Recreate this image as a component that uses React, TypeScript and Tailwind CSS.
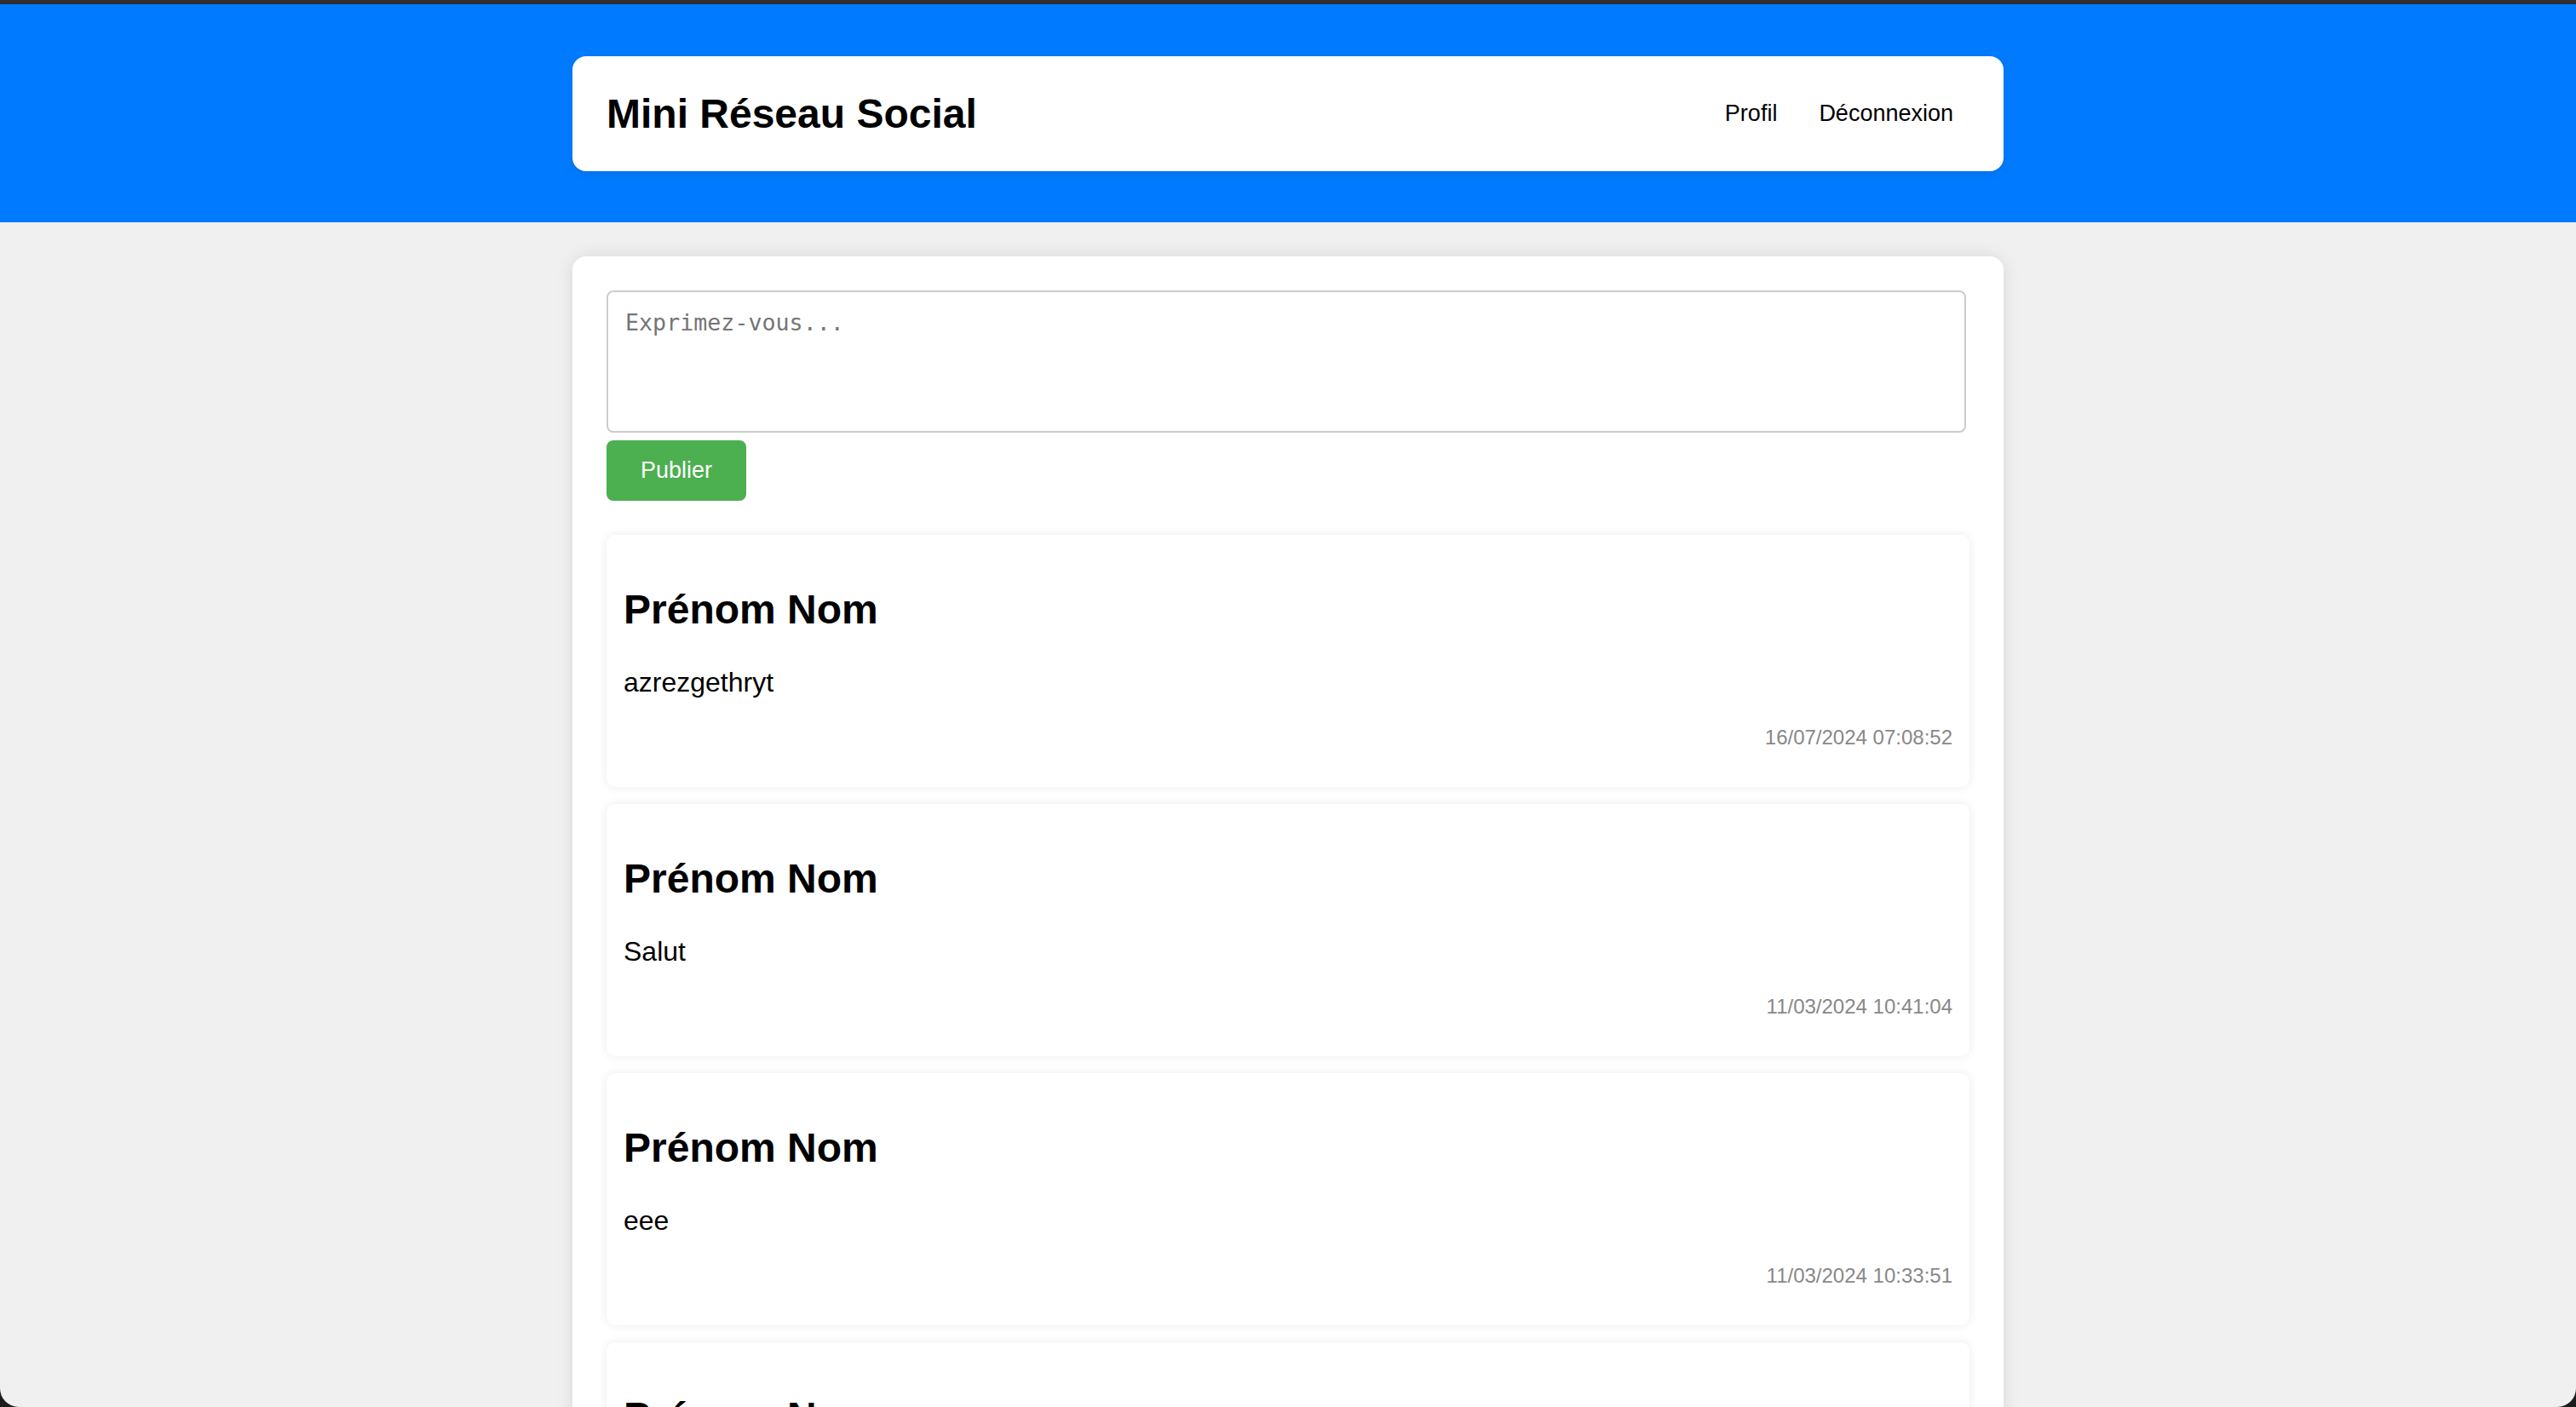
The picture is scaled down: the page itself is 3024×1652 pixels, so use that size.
const posts = [
  { author: 'Prénom Nom', content: 'azrezgethryt', date: '16/07/2024 07:08:52' },
  { author: 'Prénom Nom', content: 'Salut', date: '11/03/2024 10:41:04' },
  { author: 'Prénom Nom', content: 'eee', date: '11/03/2024 10:33:51' },
  { author: 'Prénom Nom', content: 'test', date: '11/03/2024 10:30:12' },
];

const Post = ({ author, content, date }: { author: string; content: string; date: string }) => (
  <div className="bg-white rounded-[10px] p-[20px] mb-[20px] shadow-[0_0_12px_rgba(0,0,0,0.08)]">
    <h2 className="mt-[40px] mb-[40px] text-[48px] font-bold leading-[normal] text-black">{author}</h2>
    <p className="mb-[32px] text-[32px] leading-[normal] text-black">{content}</p>
    <div className="mb-[24px] text-right text-[24px] leading-[normal] text-[#888]">{date}</div>
  </div>
);

export default function App() {
  return (
    <div className="h-[1652px] bg-[#1c1c1c] overflow-hidden font-['Liberation_Sans',Arial,sans-serif]">
      <div className="h-full bg-[#f0f0f0] rounded-b-[22px] overflow-hidden flex flex-col">
        <div className="h-[5px] bg-[#2f2f2f] shrink-0" />
        <header className="bg-[#007bff] pt-[61px] pb-[60px] shrink-0">
          <div className="mx-auto w-[1680px] h-[135px] bg-white rounded-[16px] px-[40px] flex items-center justify-between shadow-[0_4px_12px_rgba(0,0,0,0.08)]">
            <h1 className="text-[48px] font-bold leading-[normal] text-black">Mini Réseau Social</h1>
            <nav className="flex items-center gap-[49px] pr-[19px] text-[27px] text-black">
              <a href="#">Profil</a>
              <a href="#">Déconnexion</a>
            </nav>
          </div>
        </header>
        <main className="pt-[40px]">
          <div className="mx-auto w-[1680px] bg-white rounded-[16px] p-[40px] shadow-[0_0_20px_rgba(0,0,0,0.1)]">
            <textarea
              placeholder="Exprimez-vous..."
              className="block w-[1596px] h-[167px] border-2 border-[#cccccc] rounded-[8px] px-[20px] pt-[16px] pb-[18px] text-[26.67px] font-['DejaVu_Sans_Mono',monospace] placeholder:text-[#757575] resize-none outline-none"
            />
            <button className="mt-[9px] bg-[#4caf50] text-white text-[27px] leading-[normal] px-[40px] py-[20px] rounded-[8px]">
              Publier
            </button>
            <div className="mt-[40px]">
              {posts.map((p, i) => (
                <Post key={i} {...p} />
              ))}
            </div>
          </div>
        </main>
      </div>
    </div>
  );
}
